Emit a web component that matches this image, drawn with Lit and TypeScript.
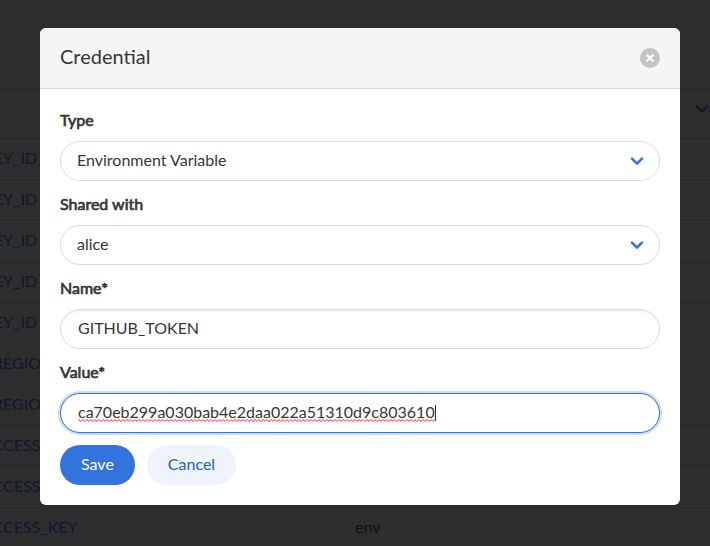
import { LitElement, html, css } from "lit";
import { customElement, query, state } from "lit/decorators.js";

interface Row {
  name: string;
  kind: string;
}

const rows: Row[] = [
  ...Array.from({ length: 5 }, () => ({ name: "AWS_ACCESS_KEY_ID", kind: "" })),
  ...Array.from({ length: 2 }, () => ({ name: "AWS_DEFAULT_REGION", kind: "" })),
  ...Array.from({ length: 2 }, () => ({ name: "AWS_SECRET_ACCESS_KEY", kind: "" })),
  { name: "AWS_SECRET_ACCESS_KEY", kind: "env" },
];

const chevron = html`<svg class="chevron" viewBox="0 0 14 10" aria-hidden="true">
  <path d="M2 2.6 L7 7.6 L12 2.6" />
</svg>`;

@customElement("app-root")
export class AppRoot extends LitElement {
  static styles = css`
    :host {
      display: block;
      position: relative;
      height: 100vh;
      overflow: hidden;
      background: #fff;
      color: #363636;
      font: 16px/24px Lato, sans-serif;
    }
    * {
      box-sizing: border-box;
    }
    .page {
      margin: 0 -26px 0 -137px;
      padding-top: 89px;
    }
    .filter {
      display: flex;
      align-items: center;
      justify-content: flex-end;
      height: 40px;
      margin-bottom: 8px;
      padding-right: 26px;
      border: 1px solid #dbdbdb;
      border-radius: 20px;
    }
    table {
      width: 100%;
      table-layout: fixed;
      border-collapse: separate;
      border-spacing: 0;
      border-top: 2px solid #dbdbdb;
    }
    td {
      height: 41px;
      padding: 0 12px 2px;
      border-bottom: 1px solid #dbdbdb;
      white-space: nowrap;
    }
    .name-col {
      width: 480px;
    }
    td a {
      color: #3268ff;
      text-decoration: none;
    }
    .overlay {
      position: absolute;
      inset: 0;
      padding: 28px 30px 28px 40px;
      background: rgba(10, 10, 10, 0.86);
    }
    .modal {
      max-width: 640px;
      margin: 0 auto;
      border-radius: 6px;
      overflow: hidden;
      background: #fff;
    }
    header {
      display: flex;
      align-items: center;
      justify-content: space-between;
      padding: 20px;
      border-bottom: 1px solid #dbdbdb;
      background: #f5f5f5;
    }
    h1 {
      margin: 0;
      padding-bottom: 4px;
      font-size: 20px;
      font-weight: 400;
      line-height: 16px;
    }
    .close {
      display: grid;
      place-items: center;
      width: 20px;
      height: 20px;
      padding: 0;
      border: 0;
      border-radius: 50%;
      background: #c4c4c4;
    }
    .close svg {
      width: 10px;
      height: 10px;
      stroke: #fff;
      stroke-width: 2.4;
    }
    form {
      display: grid;
      gap: 12px;
      padding: 20px;
    }
    .field {
      display: grid;
      gap: 10px;
    }
    label {
      line-height: 22px;
      -webkit-text-stroke: 0.7px currentColor;
    }
    .control {
      display: grid;
      align-items: center;
      position: relative;
    }
    select,
    input {
      width: 100%;
      height: 40px;
      margin: 0;
      padding: 0 16px 2px;
      border: 1px solid #dbdbdb;
      border-radius: 20px;
      outline: none;
      appearance: none;
      background: #fff;
      color: #363636;
      font: inherit;
    }
    input {
      padding: 0 17px 4px;
      box-shadow: inset 0 1px 2px rgba(10, 10, 10, 0.1);
    }
    .active {
      border-color: #3273dc;
      box-shadow: 0 0 0 2px rgba(50, 115, 220, 0.25);
      caret-color: transparent;
    }
    .marks {
      position: absolute;
      left: 18px;
      width: 358px;
      height: 16px;
      border-right: 1px solid #363636;
      pointer-events: none;
    }
    .marks svg {
      position: absolute;
      left: 0;
      bottom: -1px;
      width: 100%;
      height: 3px;
    }
    .wave {
      fill: none;
      stroke: #f22;
    }
    .chevron {
      width: 14px;
      height: 10px;
      fill: none;
      stroke: #3273dc;
      stroke-width: 2.6;
      stroke-linejoin: round;
      stroke-linecap: round;
    }
    .control .chevron {
      position: absolute;
      right: 16px;
      pointer-events: none;
    }
    .actions {
      display: flex;
      gap: 12px;
    }
    .button {
      height: 40px;
      padding: 0 21px 2px;
      border: 0;
      border-radius: 20px;
      background: #eef3fc;
      color: #2160c4;
      font: inherit;
    }
    .primary {
      background: #3273dc;
      color: #fff;
    }
  `;

  @state() private value = "ca70eb299a030bab4e2daa022a51310d9c803610";
  @query("#value") private valueInput!: HTMLInputElement;

  firstUpdated() {
    this.valueInput.focus();
    this.valueInput.setSelectionRange(this.value.length, this.value.length);
  }

  render() {
    return html`
      <div class="page">
        <div class="filter">${chevron}</div>
        <table>
          <colgroup>
            <col class="name-col" />
            <col />
          </colgroup>
          <tbody>
            ${rows.map(
              (row) => html`<tr>
                <td><a href="#">${row.name}</a></td>
                <td>${row.kind}</td>
              </tr>`
            )}
          </tbody>
        </table>
      </div>
      <div class="overlay">
        <section class="modal" role="dialog" aria-labelledby="title">
          <header>
            <h1 id="title">Credential</h1>
            <button class="close" type="button" aria-label="close">
              <svg viewBox="0 0 10 10"><path d="M1.5 1.5 L8.5 8.5 M8.5 1.5 L1.5 8.5" /></svg>
            </button>
          </header>
          <form>
            <div class="field">
              <label for="type">Type</label>
              <div class="control">
                <select id="type"><option>Environment Variable</option></select>
                ${chevron}
              </div>
            </div>
            <div class="field">
              <label for="shared">Shared with</label>
              <div class="control">
                <select id="shared"><option>alice</option></select>
                ${chevron}
              </div>
            </div>
            <div class="field">
              <label for="name">Name*</label>
              <input id="name" type="text" value="GITHUB_TOKEN" />
            </div>
            <div class="field">
              <label for="value">Value*</label>
              <div class="control">
                <input id="value" class="active" type="text" spellcheck="false" .value=${this.value} />
                <span class="marks" aria-hidden="true">
                  <svg>
                    <defs>
                      <pattern id="zigzag" width="4" height="3" patternUnits="userSpaceOnUse">
                        <path class="wave" d="M-1 3 L1 1 L3 3 L5 1" transform="translate(0 -0.5)" />
                      </pattern>
                    </defs>
                    <rect width="100%" height="3" fill="url(#zigzag)" />
                  </svg>
                </span>
              </div>
            </div>
            <div class="actions">
              <button class="button primary" type="button">Save</button>
              <button class="button" type="button">Cancel</button>
            </div>
          </form>
        </section>
      </div>
    `;
  }
}
